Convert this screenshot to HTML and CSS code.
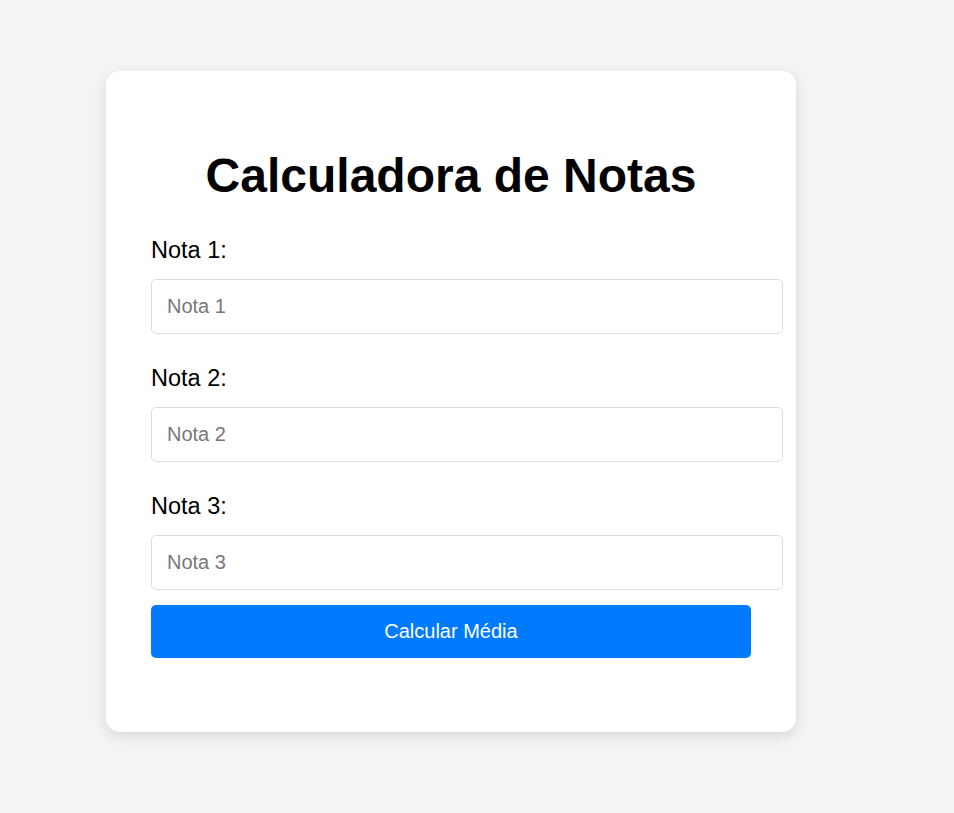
FILE: index.html
```html
<!DOCTYPE html>
<html lang="pt">
<head>
<meta charset="utf-8">
<title>Calculadora de Notas</title>
<link rel="stylesheet" href="styles.css">
</head>
<body>
<div class="card">
  <h1 class="title">Calculadora de Notas</h1>
  <label class="label" for="n1">Nota 1:</label>
  <input class="input" id="n1" type="number" placeholder="Nota 1">
  <label class="label" for="n2">Nota 2:</label>
  <input class="input" id="n2" type="number" placeholder="Nota 2">
  <label class="label" for="n3">Nota 3:</label>
  <input class="input input--last" id="n3" type="number" placeholder="Nota 3">
  <button class="btn" type="button">Calcular Média</button>
</div>
</body>
</html>
```
FILE: styles.css
```css
html, body {
  margin: 0;
  padding: 0;
}
body {
  background: #f4f4f4;
  font-family: "Liberation Sans", Arial, sans-serif;
  padding: 71px 0 0 106px;
  min-height: 813px;
  box-sizing: border-box;
}
.card {
  width: 600px;
  padding: 45px 45px 74px;
  background: #fff;
  border-radius: 14px;
  box-shadow: 0 4px 14px rgba(0, 0, 0, 0.12);
}
.title {
  font-size: 48px;
  line-height: 55px;
  font-weight: bold;
  text-align: center;
  margin: 32px 0 34px;
  color: #000;
}
.label {
  display: block;
  font-size: 23.5px;
  line-height: 27px;
  color: #000;
  margin-bottom: 15px;
}
.input {
  display: block;
  width: 600px;
  padding: 15px;
  font-family: "Liberation Sans", Arial, sans-serif;
  font-size: 20px;
  line-height: 23px;
  height: 23px;
  border: 1px solid #ddd;
  border-radius: 5px;
  margin: 0 0 31px;
  color: #000;
  -moz-appearance: textfield;
}
.input::-webkit-outer-spin-button,
.input::-webkit-inner-spin-button {
  -webkit-appearance: none;
  margin: 0;
}
.input::placeholder {
  color: #777;
}
.input--last {
  margin-bottom: 15px;
}
.btn {
  display: block;
  width: 600px;
  padding: 15px;
  background: #007bff;
  color: #fff;
  border: none;
  border-radius: 5px;
  font-family: "Liberation Sans", Arial, sans-serif;
  font-size: 20px;
  line-height: 23px;
}
```
